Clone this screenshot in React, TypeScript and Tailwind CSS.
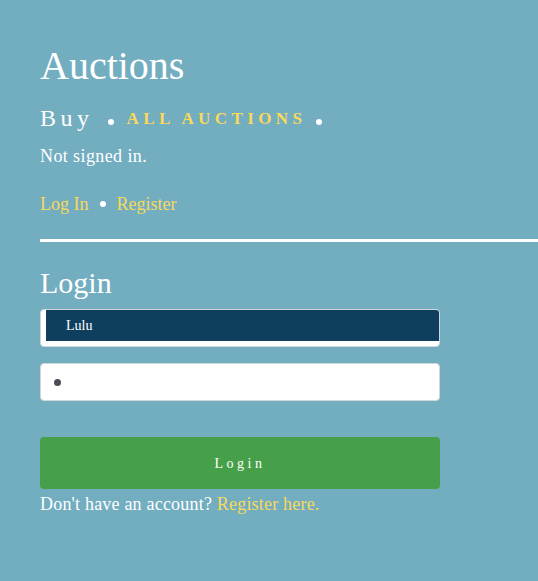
import React from "react";

const serif = { fontFamily: '"Liberation Serif", "Times New Roman", serif' };

function Dot() {
  return <span className="inline-block w-[6px] h-[6px] rounded-full bg-white" />;
}

export default function App() {
  return (
    <div className="min-h-[581px] w-full bg-[#72adc0] text-white overflow-hidden" style={serif}>
      <div className="pl-10 pt-[44px]">
        <h1 className="text-[40px] leading-[44px] font-normal">Auctions</h1>
        <div className="mt-[15px] flex items-center h-[30px]">
          <span className="text-[24px] tracking-[4.5px]">Buy</span>
          <span className="ml-[14px] mt-[3px]"><Dot /></span>
          <span className="ml-[13px] text-[17px] font-bold tracking-[4.4px] text-[#f9d95b] mt-[2px]">ALL AUCTIONS</span>
          <span className="ml-[10px] mt-[3px]"><Dot /></span>
        </div>
        <p className="mt-[13px] text-[18px] leading-[20px] tracking-[0.4px]">Not signed in.</p>
        <div className="mt-[28px] flex items-center h-[20px] text-[18px] leading-[20px] text-[#f9d95b]">
          <span>Log In</span>
          <span className="ml-[11px] mr-[11px] flex"><Dot /></span>
          <span>Register</span>
        </div>
      </div>
      <div className="ml-10 mt-[25px] h-[3px] bg-white" />
      <div className="pl-10 w-[440px]">
        <h2 className="mt-[24px] text-[30px] leading-[34px] font-normal">Login</h2>
        <div className="mt-[9px] h-[38px] rounded-[4px] border border-[#d0d6da] bg-white pl-[5px] pb-[5px]">
          <div className="h-full bg-[#0f3f5f] rounded-tr-[3px] flex items-center pl-[20px] text-[14px] text-white">
            Lulu
          </div>
        </div>
        <div className="mt-[16px] h-[38px] rounded-[4px] border border-[#d0d6da] bg-white flex items-center pl-[13px]">
          <span className="inline-block w-[7px] h-[7px] rounded-full bg-[#4a4d55]" />
        </div>
        <button className="mt-[36px] w-full h-[52px] rounded-[4px] bg-[#46a049] text-white text-[14px] tracking-[3.5px]" style={serif}>
          Login
        </button>
        <p className="mt-[4px] text-[18px] leading-[22px] tracking-[0.2px]">
          Don't have an account? <span className="text-[#f9d95b]">Register here.</span>
        </p>
      </div>
    </div>
  );
}
